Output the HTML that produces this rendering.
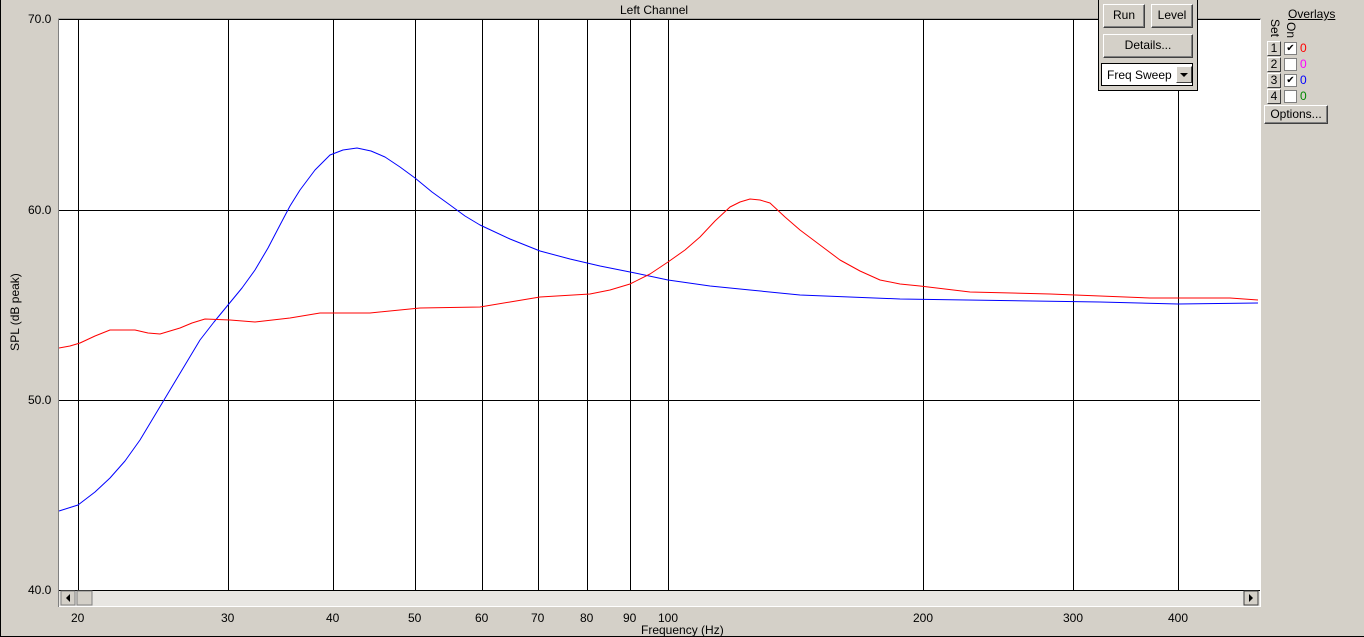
<!DOCTYPE html>
<html><head><style>
body{margin:0;width:1364px;height:637px;background:#d4d0c8;font-family:"Liberation Sans",sans-serif;font-size:12px;position:relative;overflow:hidden}
.a{position:absolute}
.btn{position:absolute;background:#d4d0c8;border:1px solid;border-color:#fff #404040 #404040 #fff;box-shadow:inset -1px -1px #808080;text-align:center;font-size:12px;line-height:20px;color:#000}
.sm{position:absolute;width:12px;height:13px;background:#d4d0c8;border:1px solid;border-color:#fff #404040 #404040 #fff;font-size:12px;line-height:13px;text-align:center}
.cb{position:absolute;width:11px;height:11px;background:#fff;border:1px solid #808080;font-size:10px;line-height:11px;text-align:center}
</style></head><body>
<div class="a" style="left:0;top:636px;width:1364px;height:1px;background:#000"></div>
<div class="a" style="left:0;top:0;width:1px;height:637px;background:#000"></div>
<svg class="a" style="left:0;top:0" width="1364" height="637">
<rect x="58" y="19" width="1203" height="588" fill="#fff"/>
<line x1="58" y1="19" x2="1261" y2="19" stroke="#808080"/>
<line x1="58.5" y1="19" x2="58.5" y2="607" stroke="#808080"/>
<g stroke="#000" stroke-width="1">
<line x1="59" y1="210.5" x2="1260" y2="210.5"/>
<line x1="59" y1="400.5" x2="1260" y2="400.5"/>
<line x1="59" y1="590.5" x2="1260" y2="590.5"/>
<line x1="59" y1="19.5" x2="1260" y2="19.5"/>
<g transform="translate(0.5,0)">
<line x1="78" y1="19" x2="78" y2="590"/><line x1="228" y1="19" x2="228" y2="590"/><line x1="333" y1="19" x2="333" y2="590"/><line x1="415" y1="19" x2="415" y2="590"/><line x1="482" y1="19" x2="482" y2="590"/><line x1="538" y1="19" x2="538" y2="590"/><line x1="587" y1="19" x2="587" y2="590"/><line x1="630" y1="19" x2="630" y2="590"/><line x1="668" y1="19" x2="668" y2="590"/><line x1="923" y1="19" x2="923" y2="590"/><line x1="1073" y1="19" x2="1073" y2="590"/><line x1="1178" y1="19" x2="1178" y2="590"/>
</g></g>
<polyline fill="none" stroke="#0000ff" stroke-linejoin="round" points="59,511 78,505 95,492 110,478 125,461 140,440 155,415 170,390 185,365 200,340 214,322 228,305 242,288 255,270 268,248 280,225 290,206 300,190 315,170 330,155 343,150 357,148 371,151 385,157 400,167 415,178 432,192 450,205 465,216 480,225 510,239 540,251 570,259 600,266 635,273 668,280 710,286 750,290 800,295 900,299 1100,302 1178,304 1258,303"/>
<polyline fill="none" stroke="#ff0000" stroke-linejoin="round" points="59,348 70,346 80,343 95,336 110,330 135,330 148,333 160,334 170,331 180,328 192,323 205,319 230,320 255,322 290,318 320,313 370,313 420,308 480,307 510,302 540,297 590,294 610,290 630,284 650,274 668,262 685,250 700,237 715,221 730,207 740,202 750,199 760,200 770,203 785,217 800,230 820,245 840,260 860,271 880,280 900,284 920,286 945,289 970,292 1050,294 1150,298 1230,298 1258,300"/>
<rect x="59" y="591" width="1201" height="15" fill="#e8e6e2"/>
<rect x="61" y="591" width="14" height="14" fill="#d4d0c8" stroke="#808080"/>
<polygon points="66,598 70,594 70,602" fill="#000"/>
<rect x="77" y="591" width="15" height="14" fill="#d4d0c8" stroke="#808080"/>
<rect x="1244" y="591" width="14" height="14" fill="#d4d0c8" stroke="#404040"/>
<polygon points="1253,598 1249,594 1249,602" fill="#000"/>
</svg>
<div class="a" style="left:620px;top:3px">Left Channel</div>
<div class="a" style="left:28px;top:12px">70.0</div>
<div class="a" style="left:28px;top:203px">60.0</div>
<div class="a" style="left:28px;top:393px">50.0</div>
<div class="a" style="left:28px;top:583px">40.0</div>
<div class="a" style="left:-30px;top:305px;transform:rotate(-90deg);width:90px;text-align:center">SPL (dB peak)</div>
<div class="a" style="left:71px;top:611px">20</div><div class="a" style="left:221px;top:611px">30</div><div class="a" style="left:326px;top:611px">40</div><div class="a" style="left:408px;top:611px">50</div><div class="a" style="left:475px;top:611px">60</div><div class="a" style="left:531px;top:611px">70</div><div class="a" style="left:580px;top:611px">80</div><div class="a" style="left:623px;top:611px">90</div><div class="a" style="left:658px;top:611px">100</div><div class="a" style="left:913px;top:611px">200</div><div class="a" style="left:1063px;top:611px">300</div><div class="a" style="left:1168px;top:611px">400</div>
<div class="a" style="left:641px;top:623px">Frequency (Hz)</div>
<div class="a" style="left:1098px;top:0;width:98px;height:90px;background:#d4d0c8;border:1px solid #000;border-top:none"></div>
<div class="btn" style="left:1103px;top:4px;width:40px;height:22px">Run</div>
<div class="btn" style="left:1151px;top:4px;width:40px;height:22px">Level</div>
<div class="btn" style="left:1103px;top:34px;width:88px;height:22px">Details...</div>
<div class="a" style="left:1101px;top:63px;width:90px;height:21px;background:#fff;border:1px solid #000"><span style="position:absolute;left:5px;top:4px">Freq Sweep</span><div style="position:absolute;left:74px;top:2px;width:14px;height:15px;background:#d4d0c8;border:1px solid;border-color:#fff #404040 #404040 #fff"><div style="position:absolute;left:3px;top:6px;border-left:4px solid transparent;border-right:4px solid transparent;border-top:4px solid #000"></div></div></div>
<div class="a" style="left:1288px;top:7px;text-decoration:underline">Overlays</div>
<div class="a" style="top:19px;transform:rotate(90deg);transform-origin:left top;left:1282px;white-space:nowrap">Set</div>
<div class="a" style="top:22px;transform:rotate(90deg);transform-origin:left top;left:1298px;white-space:nowrap">On</div>
<div class="sm" style="left:1267px;top:41px">1</div><div class="cb" style="left:1284px;top:42px">✔</div><div class="a" style="left:1300px;top:41px;color:#f00">0</div>
<div class="sm" style="left:1267px;top:57px">2</div><div class="cb" style="left:1284px;top:58px"></div><div class="a" style="left:1300px;top:57px;color:#f0f">0</div>
<div class="sm" style="left:1267px;top:73px">3</div><div class="cb" style="left:1284px;top:74px">✔</div><div class="a" style="left:1300px;top:73px;color:#00f">0</div>
<div class="sm" style="left:1267px;top:89px">4</div><div class="cb" style="left:1284px;top:90px"></div><div class="a" style="left:1300px;top:89px;color:#080">0</div>
<div class="btn" style="left:1264px;top:105px;width:62px;height:17px;line-height:17px">Options...</div>
</body></html>
